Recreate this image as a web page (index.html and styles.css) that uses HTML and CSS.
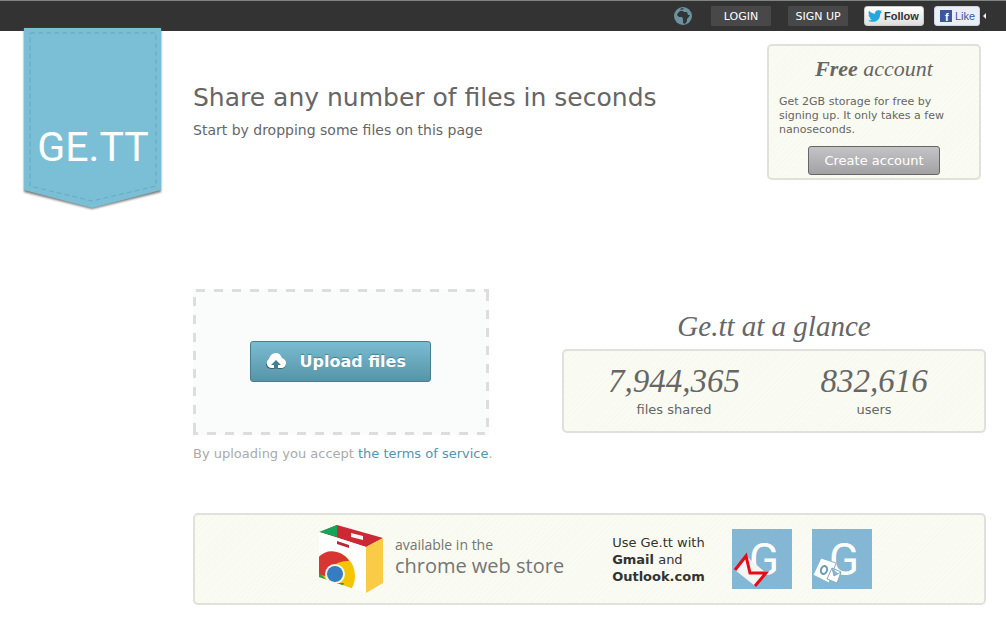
FILE: index.html
```html
<!DOCTYPE html>
<html lang="en">
<head>
<meta charset="utf-8">
<title>Ge.tt</title>
<link rel="stylesheet" href="styles.css">
</head>
<body>
<header class="topbar">
  <a class="brand" href="#" aria-label="Ge.tt home">
    <svg width="142" height="186" viewBox="0 0 142 186">
      <path class="brand-shadow" d="M2 2H139V165L70 182L2 165Z"/>
      <path fill="#7bbfd7" d="M2 1H139V163L70 181L2 163Z"/>
      <path class="brand-stitch" d="M8 6H134V159L70 174L8 159Z"/>
      <text class="brand-name" x="71" y="134" text-anchor="middle">GE.TT</text>
    </svg>
  </a>
  <nav class="topnav">
    <button class="globe" type="button" aria-label="Language">
      <svg width="18" height="18" viewBox="0 0 18 18"><circle cx="9" cy="9" r="9" fill="#6d929c"/><path fill="#303538" d="M4 6l2-2 3 0 1 1 3 0 1 3 2 0-2 3-1 1 0 2-2 3-2-1 0-4-1-2-3 0-2-2z"/><path fill="#303538" d="M6 2l3-1 1 1-3 1z"/></svg>
    </button>
    <button class="nav-button login" type="button">LOGIN</button>
    <button class="nav-button signup" type="button">SIGN UP</button>
    <button class="social follow" type="button">
      <svg width="14" height="12" viewBox="0 0 24 20"><path fill="#22a7df" d="M24 3l-3 3c0 9-6 14-13 14-3 0-6-1-8-2 3 0 5-1 7-2-2 0-4-1-4-3h2C2 12 1 10 1 8l2 1C1 7 0 4 2 1c2 3 6 5 10 5 0-4 2-6 5-6 2 0 3 0 4 1l3-1-2 3z"/></svg>
      <span>Follow</span>
    </button>
    <button class="social like" type="button">
      <svg width="12" height="12" viewBox="0 0 12 12"><rect width="12" height="12" fill="#3c589b"/><text class="fb-letter" x="5" y="11">f</text></svg>
      <span>Like</span>
    </button>
    <svg class="notch" width="3" height="6" viewBox="0 0 3 6"><path fill="#eee" d="M3 0V6L0 3Z"/></svg>
  </nav>
</header>

<main class="page">
  <section class="hero">
    <div class="intro">
      <h1>Share any number of files in seconds</h1>
      <p>Start by dropping some files on this page</p>
    </div>
    <aside class="panel account">
      <h2><strong>Free</strong> account</h2>
      <p>Get 2GB storage for free by signing up. It only takes a few nanoseconds.</p>
      <button class="create" type="button">Create account</button>
    </aside>
  </section>

  <section class="middle">
    <div class="upload">
      <div class="dropzone">
        <button class="upload-button" type="button">
          <svg width="20" height="17" viewBox="0 0 20 17"><path fill="#40606a" d="M5 16a5 5 0 0 1-5-5l20 0a5 5 0 0 1-5 5z"/><path fill="#fff" d="M5 15a5 5 0 0 1-2-9C4 2 7 0 10 0c3 0 5 2 6 5 2 1 4 2 4 5s-2 5-5 5z"/><path fill="#437d90" d="M10 7l5 5h-3v4H8v-4H5z"/></svg>
          <span>Upload files</span>
        </button>
      </div>
      <p class="terms">By uploading you accept <a href="#">the terms of service</a>.</p>
    </div>
    <div class="glance">
      <h2>Ge.tt at a glance</h2>
      <dl class="panel stats">
        <div><dt>files shared</dt><dd>7,944,365</dd></div>
        <div><dt>users</dt><dd>832,616</dd></div>
      </dl>
    </div>
  </section>

  <section class="panel promo">
    <a class="store" href="#">
      <svg width="64" height="68" viewBox="0 0 64 68">
        <defs><clipPath id="bag"><path d="M0 7L47 22V68L0 52Z"/></clipPath></defs>
        <path fill="#cb2934" d="M18 0L64 13L47 22L1 7Z"/>
        <path fill="#16a35a" d="M18 0V12L0 7Z"/>
        <path fill="#f5f5f3" d="M32 8l12 3v4l-12-3z"/>
        <path fill="#fff" d="M0 7L47 22V68L0 52Z"/>
        <path fill="#f9cb46" d="M47 22L64 13V58L47 68Z"/>
        <path fill="#b92635" d="M18 16l12 4v3l-12-4z"/>
        <g clip-path="url(#bag)">
          <ellipse cx="14" cy="51" rx="22" ry="24" fill="#f5c500"/>
          <path fill="#d83632" d="M-4 42C-2 22 22 22 30 36C24 36 19 37 16 40L7 51L0 50Z"/>
          <path fill="#28a052" d="M0 48l5 4 4 6 16 0-2 5-25-8z"/>
          <circle cx="16" cy="49" r="10" fill="#f4f7f8"/>
          <circle cx="16" cy="49" r="8" fill="#367cc0"/>
        </g>
      </svg>
      <span class="store-text"><small>available in the</small><span>chrome web store</span></span>
    </a>
    <p class="mail-text">Use Ge.tt with <strong>Gmail</strong> and <strong>Outlook.com</strong></p>
    <div class="tiles">
      <a href="#" aria-label="Gmail">
        <svg width="60" height="60" viewBox="0 0 60 60"><rect width="60" height="60" fill="#83b7d3"/><text class="tile-letter" x="32" y="46" text-anchor="middle">G</text><path fill="#f4f4f4" d="M14 27L34 44L23 57L3 41Z"/><path fill="none" stroke="#e30d17" stroke-width="3" d="M3 41L14 27L18 44L34 44L23 57"/></svg>
      </a>
      <a href="#" aria-label="Outlook.com">
        <svg width="60" height="60" viewBox="0 0 60 60"><rect width="60" height="60" fill="#83b7d3"/><text class="tile-letter" x="32" y="46" text-anchor="middle">G</text><path fill="#fff" stroke="#83b7d3" d="M9 29L24 34L17 54L1 46Z"/><path fill="#fff" stroke="#8aa9b8" d="M20 39L29 43L25 54L15 50ZM20 39L22 47L29 43"/><ellipse cx="12" cy="41" rx="3" ry="4" fill="none" stroke="#6a9bb5" stroke-width="2" transform="rotate(20 12 41)"/></svg>
      </a>
    </div>
  </section>
</main>
</body>
</html>
```
FILE: styles.css
```css
* { box-sizing: border-box; }
body { margin: 0; background: #fff; color: #666; font-family: "DejaVu Sans", sans-serif; font-size: 13px; }
h1, h2, p, dl, dd { margin: 0; font-weight: normal; }
button { font: inherit; cursor: pointer; }
a { color: #5196ab; text-decoration: none; }
svg { display: block; flex: none; }

.topbar { position: relative; height: 31px; padding: 0 20px; background: #333; border-top: 1px solid #7e8583; }
.brand { position: absolute; left: 22px; top: 26px; }
.brand-shadow { fill: #777; filter: blur(1px); }
.brand-stitch { fill: none; stroke: #66a9c0; stroke-dasharray: 5 3; }
.brand-name { fill: #fff; font-family: Roboto, sans-serif; font-size: 41px; }
.topnav { display: flex; justify-content: flex-end; align-items: center; height: 30px; }
.globe { padding: 0; border: 0; background: none; margin-right: 19px; }
.nav-button { width: 60px; height: 20px; padding: 0; border: 0; border-radius: 1px; background: #484848; color: #fff; font-size: 11px; }
.login { margin-right: 17px; }
.signup { margin-right: 16px; }
.social { display: flex; align-items: center; gap: 2px; height: 20px; padding: 0 3px; border: 1px solid #ccc; border-radius: 3px; background: linear-gradient(#fff, #dedede); font-family: "Liberation Sans", sans-serif; font-size: 11px; }
.follow { width: 60px; color: #333; font-weight: bold; margin-right: 10px; }
.like { width: 46px; padding: 0 5px; gap: 3px; border-color: #cad4e7; background: #eceef5; color: #3b5998; margin-right: 3px; }
.fb-letter { fill: #fff; font: bold 11px "Liberation Sans", sans-serif; }

.page { padding: 13px 20px 31px 193px; }
.panel { border: 2px solid #e0e1dc; border-radius: 5px; background: repeating-linear-gradient(135deg, #fafbf2 0 2px, #f8faef 2px 4px); }
.hero { display: flex; justify-content: space-between; align-items: flex-start; padding-right: 5px; }
.intro { padding-top: 37px; }
h1 { font-size: 25px; line-height: 34px; }
.intro p { font-size: 14px; line-height: 20px; margin-top: 5px; }
.account { width: 214px; padding: 9px 10px 3px; }
.account h2 { font: italic 22px/28px "Liberation Serif", serif; text-align: center; }
.account p { font-size: 11px; line-height: 14px; margin: 12px 0 9px; }
.create { display: block; width: 132px; height: 29px; margin: 0 auto; padding: 0; border: 1px solid #666; border-radius: 3px; background: linear-gradient(#c4c4c6, #a2a2a4); color: #fff; font-size: 13px; }

.middle { display: flex; justify-content: space-between; align-items: flex-start; margin-top: 109px; }
.upload { width: 300px; }
.dropzone {
  --dash: #ddd 0 9px, transparent 9px 18px;
  display: flex; align-items: center; justify-content: center; width: 296px; height: 146px; padding: 0 2px 2px 0;
  background:
    repeating-linear-gradient(90deg, var(--dash)) 3px 0 / 100% 3px no-repeat,
    repeating-linear-gradient(90deg, var(--dash)) -4px 100% / 100% 3px no-repeat,
    repeating-linear-gradient(180deg, var(--dash)) 0 8px / 3px 100% no-repeat,
    repeating-linear-gradient(180deg, var(--dash)) 100% 3px / 3px 100% no-repeat,
    #fafcfb;
}
.upload-button { display: flex; align-items: center; gap: 14px; width: 181px; height: 41px; padding: 0 15px; border: 1px solid #477e8d; border-radius: 3px; background: linear-gradient(#7abcd2, #5794a7); color: #fff; font-size: 16px; font-weight: bold; text-shadow: 0 -1px 1px #477e8d; }
.terms { margin-top: 10px; line-height: 18px; color: #aaa; white-space: nowrap; }
.glance { width: 424px; padding-top: 20px; }
.glance h2 { font: italic 29px/34px "Liberation Serif", serif; text-align: center; }
.stats { display: grid; grid-template-columns: 1fr 1fr; height: 84px; margin-top: 6px; padding: 10px; text-align: center; }
.stats div { display: flex; flex-direction: column-reverse; justify-content: flex-end; }
.stats dd { font: italic 33px/40px "Liberation Serif", serif; }
.stats dt { line-height: 18px; }

.promo { display: flex; justify-content: center; align-items: center; margin-top: 50px; height: 92px; padding-left: 12px; }
.store { display: flex; align-items: center; gap: 12px; color: #757575; font-family: "Open Sans", sans-serif; margin-right: 48px; }
.store-text { display: flex; flex-direction: column; padding-bottom: 4px; font-size: 20px; line-height: 24px; }
.store-text small { font-size: 14px; line-height: 18px; }
.mail-text { width: 100px; margin-right: 20px; color: #333; line-height: 17px; }
.tiles { display: flex; gap: 20px; }
.tile-letter { fill: #fff; font: 44px Roboto, sans-serif; }
```
